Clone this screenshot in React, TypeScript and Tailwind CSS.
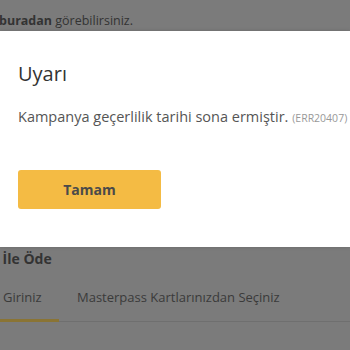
export default function App() {
  return (
    <div className="relative h-[350px] w-[350px] overflow-hidden bg-[#7b7b7b] font-['Open_Sans',sans-serif]">
      <div className="flex flex-col">
        <p className="ml-[-1px] mt-[12px] text-[12.5px] leading-[18px] text-[#333]">
          <span className="font-bold">buradan</span> görebilirsiniz.
        </p>
        <p className="ml-[-8px] mt-[219px] text-[14px] font-bold leading-[20px] text-[#333]">
          s İle Öde
        </p>
        <div className="mt-[19px] flex border-b border-[#6f6f6f] text-[13px] text-[#3a3a3a]">
          <div className="-mb-px w-[59px] border-b-[3px] border-[#8a7434] pb-[11px] pl-[3px]">Giriniz</div>
          <div className="pb-[11px] pl-[18px]">Masterpass Kartlarınızdan Seçiniz</div>
        </div>
      </div>

      <div className="absolute left-0 right-0 top-[31px] h-[216px] bg-white px-[18px] shadow-[0_0_4px_rgba(0,0,0,0.15)]">
        <h2 className="mt-[29px] text-[20px] leading-[28px] text-[#333]">Uyarı</h2>
        <p className="mt-[19px] whitespace-nowrap text-[14.5px] leading-[20px] text-[#555]">
          Kampanya geçerlilik tarihi sona ermiştir.{" "}
          <span className="text-[10.5px] text-[#999]">(ERR20407)</span>
        </p>
        <button className="mt-[42px] h-[39px] w-[143px] rounded-[3px] bg-[#f4bb44] text-[14px] font-bold text-[#4a4a4a]">
          Tamam
        </button>
      </div>
    </div>
  );
}
